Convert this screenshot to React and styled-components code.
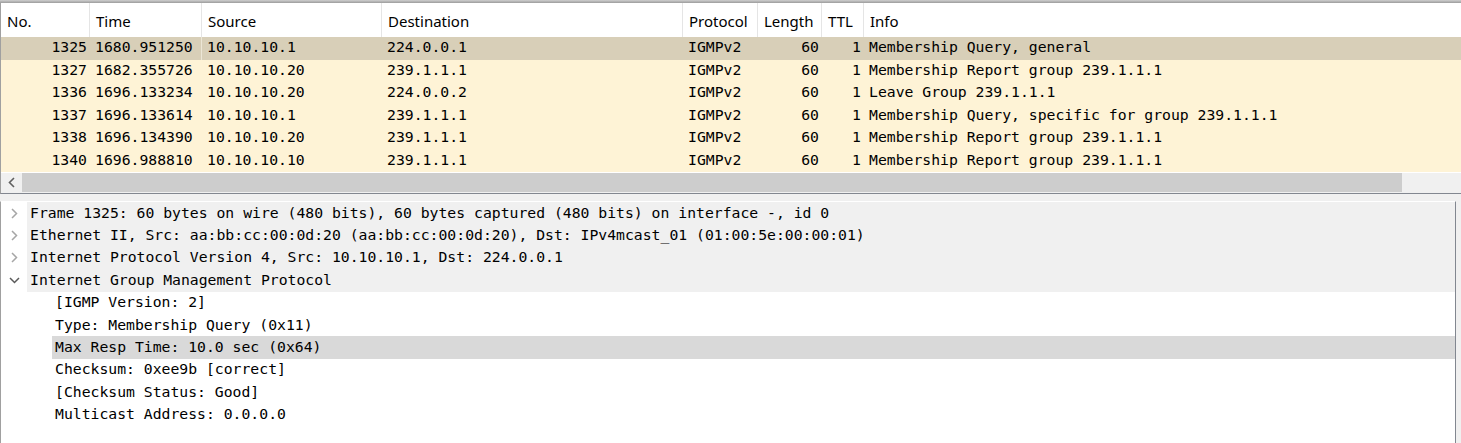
import React from 'react'
import styled, { createGlobalStyle } from 'styled-components'

const GlobalStyle = createGlobalStyle`
  html, body {
    margin: 0;
    padding: 0;
    background: #f0f0f0;
  }
  body {
    width: 1461px;
    height: 443px;
    overflow: hidden;
  }
`

const COLS = '89px 112px 180px 301px 75px 64px 42px 1fr'
const MONO = '"DejaVu Sans Mono", "Liberation Mono", monospace'

const packets = [
  ['1325', '1680.951250', '10.10.10.1', '224.0.0.1', 'IGMPv2', '60', '1', 'Membership Query, general'],
  ['1327', '1682.355726', '10.10.10.20', '239.1.1.1', 'IGMPv2', '60', '1', 'Membership Report group 239.1.1.1'],
  ['1336', '1696.133234', '10.10.10.20', '224.0.0.2', 'IGMPv2', '60', '1', 'Leave Group 239.1.1.1'],
  ['1337', '1696.133614', '10.10.10.1', '239.1.1.1', 'IGMPv2', '60', '1', 'Membership Query, specific for group 239.1.1.1'],
  ['1338', '1696.134390', '10.10.10.20', '239.1.1.1', 'IGMPv2', '60', '1', 'Membership Report group 239.1.1.1'],
  ['1340', '1696.988810', '10.10.10.10', '239.1.1.1', 'IGMPv2', '60', '1', 'Membership Report group 239.1.1.1'],
]

const headers = ['No.', 'Time', 'Source', 'Destination', 'Protocol', 'Length', 'TTL', 'Info']
const rightCols = [0, 5, 6]

const tree = [
  { level: 0, text: 'Frame 1325: 60 bytes on wire (480 bits), 60 bytes captured (480 bits) on interface -, id 0' },
  { level: 0, text: 'Ethernet II, Src: aa:bb:cc:00:0d:20 (aa:bb:cc:00:0d:20), Dst: IPv4mcast_01 (01:00:5e:00:00:01)' },
  { level: 0, text: 'Internet Protocol Version 4, Src: 10.10.10.1, Dst: 224.0.0.1' },
  { level: 0, text: 'Internet Group Management Protocol', open: true },
  { level: 1, text: '[IGMP Version: 2]' },
  { level: 1, text: 'Type: Membership Query (0x11)' },
  { level: 1, text: 'Max Resp Time: 10.0 sec (0x64)', selected: true },
  { level: 1, text: 'Checksum: 0xee9b [correct]' },
  { level: 1, text: '[Checksum Status: Good]' },
  { level: 1, text: 'Multicast Address: 0.0.0.0' },
]

const Chevron = ({ open }) =>
  open ? (
    <svg width="11" height="7" viewBox="0 0 11 7">
      <path d="M1 1 L5.5 5.5 L10 1" fill="none" stroke="#5a5a5a" strokeWidth="1.5" />
    </svg>
  ) : (
    <svg width="7" height="11" viewBox="0 0 7 11">
      <path d="M1 1 L5.5 5.5 L1 10" fill="none" stroke="#a6a6a6" strokeWidth="1.5" />
    </svg>
  )

const App = () => {
  return (
    <>
      <GlobalStyle />
      <Window>
        <PacketList>
          <TopEdge />
          <HeaderRow>
            {headers.map((h) => (
              <HeaderCell key={h}>{h}</HeaderCell>
            ))}
          </HeaderRow>
          {packets.map((p, i) => (
            <PacketRow key={p[0]} selected={i === 0}>
              {p.map((v, j) => (
                <Cell key={j} right={rightCols.includes(j)} divider={i === 0 && j === 1}>
                  {v}
                </Cell>
              ))}
            </PacketRow>
          ))}
          <HScroll>
            <ScrollButton>
              <svg width="7" height="11" viewBox="0 0 7 11">
                <path d="M6 1 L1.5 5.5 L6 10" fill="none" stroke="#606060" strokeWidth="1.6" />
              </svg>
            </ScrollButton>
            <Thumb />
          </HScroll>
        </PacketList>

        <DetailPane>
          {tree.map((t) => (
            <TreeRow key={t.text}>
              <Gutter>{t.level === 0 && <Chevron open={t.open} />}</Gutter>
              <TreeText level={t.level} top={t.level === 0} selected={t.selected}>
                {t.text}
              </TreeText>
            </TreeRow>
          ))}
        </DetailPane>
      </Window>
    </>
  )
}

const Window = styled.div`
  width: 1461px;
  height: 443px;
  display: flex;
  flex-direction: column;
  background: #f0f0f0;
  overflow: hidden;
`

const PacketList = styled.div`
  display: flex;
  flex-direction: column;
  background: #fff;
  border-left: 1px solid #a0a0a0;
  border-bottom: 1px solid #828790;
`

const TopEdge = styled.div`
  height: 3px;
  margin-left: -1px;
  background: linear-gradient(#cfcfcf, #9c9c9c);
`

const HeaderRow = styled.div`
  display: grid;
  grid-template-columns: ${COLS};
  height: 34px;
  background: #fff;
`

const HeaderCell = styled.div`
  display: flex;
  align-items: center;
  padding: 2px 0 0 6px;
  border-right: 1px solid #e5e5e5;
  font-family: "Noto Sans", "Open Sans", sans-serif;
  font-size: 15px;
  color: #000;
  white-space: nowrap;
  overflow: hidden;
  &:last-child {
    border-right: none;
  }
`

const PacketRow = styled.div`
  display: grid;
  grid-template-columns: ${COLS};
  height: 22.5px;
  background: ${(p) => (p.selected ? '#d8cfb8' : '#fef3d6')};
`

const Cell = styled.div`
  display: flex;
  align-items: center;
  justify-content: ${(p) => (p.right ? 'flex-end' : 'flex-start')};
  padding: 0 ${(p) => (p.right ? '3px' : '0')} 3px ${(p) => (p.right ? '0' : '5px')};
  font-family: ${MONO};
  font-size: 14.75px;
  color: #000;
  white-space: nowrap;
  overflow: hidden;
  border-right: ${(p) => (p.divider ? '1px solid #ece6d6' : 'none')};
`

const HScroll = styled.div`
  display: flex;
  height: 20px;
  border-top: 1px solid #fff;
  background: #f0f0f0;
  padding-right: 59px;
`

const ScrollButton = styled.div`
  width: 21px;
  height: 19px;
  display: flex;
  align-items: center;
  justify-content: center;
`

const Thumb = styled.div`
  flex: 1;
  height: 19px;
  background: #cdcdcd;
`

const DetailPane = styled.div`
  flex: 1;
  margin-top: 7px;
  margin-right: 5px;
  background: #fff;
  border-top: 1px solid #fff;
  border-left: 1px solid #a0a0a0;
  border-right: 1px solid #828790;
`

const TreeRow = styled.div`
  display: flex;
  height: 22.4px;
`

const Gutter = styled.div`
  width: 25px;
  flex: none;
  display: flex;
  align-items: center;
  justify-content: center;
  padding-left: 1px;
  background: #fff;
`

const TreeText = styled.div`
  flex: 1;
  display: flex;
  align-items: center;
  padding: 0 0 2px 3px;
  margin-left: ${(p) => p.level * 25}px;
  background: ${(p) => (p.selected ? '#d9d9d9' : p.top ? '#f0f0f0' : '#fff')};
  font-family: ${MONO};
  font-size: 14.75px;
  color: #000;
  white-space: nowrap;
`

export default App
